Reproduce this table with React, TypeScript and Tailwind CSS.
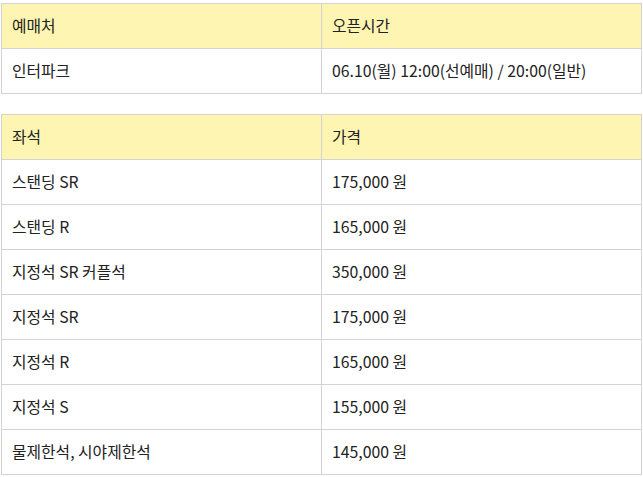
const sale = [["인터파크", "06.10(월) 12:00(선예매) / 20:00(일반)"]];

const seats = [
  ["스탠딩 SR", "175,000 원"],
  ["스탠딩 R", "165,000 원"],
  ["지정석 SR 커플석", "350,000 원"],
  ["지정석 SR", "175,000 원"],
  ["지정석 R", "165,000 원"],
  ["지정석 S", "155,000 원"],
  ["물제한석, 시야제한석", "145,000 원"],
];

function InfoTable({ head, rows }: { head: string[]; rows: string[][] }) {
  return (
    <table className="w-[641px] table-fixed border-collapse">
      <thead>
        <tr className="bg-[#fff5b3]">
          {head.map((h) => (
            <th
              key={h}
              className="h-[45px] border border-[#d3d3d3] px-[10px] text-left align-middle text-[15.8px] font-normal text-[#222]"
            >
              {h}
            </th>
          ))}
        </tr>
      </thead>
      <tbody>
        {rows.map((r) => (
          <tr key={r[0]}>
            {r.map((c, i) => (
              <td
                key={i}
                className="h-[45px] border border-[#d3d3d3] px-[10px] align-middle text-[15.8px] text-[#222]"
              >
                {c}
              </td>
            ))}
          </tr>
        ))}
      </tbody>
    </table>
  );
}

export default function App() {
  return (
    <div className="min-h-[477px] bg-white pl-px pt-[3px] font-['Noto_Sans_CJK_KR','Noto_Sans',sans-serif]">
      <InfoTable head={["예매처", "오픈시간"]} rows={sale} />
      <div className="mt-[20px]">
        <InfoTable head={["좌석", "가격"]} rows={seats} />
      </div>
    </div>
  );
}
